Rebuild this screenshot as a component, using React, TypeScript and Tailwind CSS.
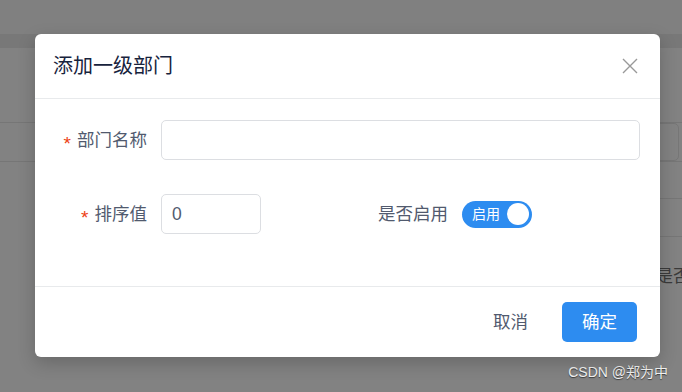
const font = "font-['Liberation_Sans','Noto_Sans_CJK_SC',sans-serif]";

function Required() {
  return <span className="mr-[6px] pt-[6px] text-[19px] leading-none text-[#ed4014]">*</span>;
}

function Label({ text, required }: { text: string; required?: boolean }) {
  return (
    <div className="flex w-[106px] shrink-0 items-center justify-end pr-[14px] text-[17.5px] text-[#515a6e]">
      {required && <Required />}
      <span>{text}</span>
    </div>
  );
}

function Switch() {
  return (
    <div className="flex h-[27px] w-[70px] items-center justify-between rounded-full bg-[#2d8cf0] pl-[10px] pr-[3px]">
      <span className="text-[14px] leading-none text-white">启用</span>
      <span className="h-[22px] w-[22px] rounded-full bg-white" />
    </div>
  );
}

function Page() {
  // the page behind the mask, dimmed
  return (
    <div className="flex h-full w-full flex-col bg-[#828282]">
      <div className="h-[34px] bg-[#808080]" />
      <div className="h-[14px] bg-[#787878]" />
      <div className="h-[74px]" />
      <div className="flex h-[40px] border-y border-[#767676]">
        <div className="ml-auto h-full w-[40px] rounded-[5px] border border-[#767676] mr-[3px]" />
      </div>
      <div className="h-[36px]" />
      <div className="flex h-[39px]">
        <div className="ml-auto h-full w-[30px] border-y border-[#767676]" />
      </div>
      <div className="flex h-[48px] items-end">
        <span className="whitespace-nowrap pl-[656px] text-[17px] leading-none text-[#3a3a3a]">是否启用</span>
      </div>
      <div className="flex flex-1 items-end justify-end pb-[9px] pr-[14px]">
        <span className="text-[14px] text-[#f2f2f2] [text-shadow:0_1px_1px_rgba(0,0,0,0.55)]">CSDN @郑为中</span>
      </div>
    </div>
  );
}

export default function App() {
  return (
    <div className={`relative h-[392px] w-[682px] overflow-hidden ${font}`}>
      <Page />
      <div className="absolute left-[35px] top-[34px] w-[625px] rounded-[6px] bg-white shadow-[0_6px_18px_rgba(0,0,0,0.2)]">
        <div className="flex h-[65px] items-center justify-between border-b border-[#e8eaec] pl-[18px] pr-[22px]">
          <span className="text-[20px] text-[#17233d]">添加一级部门</span>
          <svg width="16" height="16" viewBox="0 0 16 16" className="text-[#999]">
            <path d="M1 1 L15 15 M15 1 L1 15" stroke="currentColor" strokeWidth="1.4" fill="none" />
          </svg>
        </div>
        <div className="flex flex-col gap-[34px] px-[20px] pb-[52px] pt-[21px]">
          <div className="flex h-[40px] items-center">
            <Label text="部门名称" required />
            <div className="h-[40px] flex-1 rounded-[5px] border border-[#dcdee2]" />
          </div>
          <div className="flex h-[40px] items-center">
            <div className="flex w-[301px] items-center">
              <Label text="排序值" required />
              <div className="flex h-[40px] w-[100px] items-center rounded-[5px] border border-[#dcdee2] pl-[10px] text-[17.5px] text-[#515a6e]">
                0
              </div>
            </div>
            <Label text="是否启用" />
            <Switch />
          </div>
        </div>
        <div className="flex items-center justify-end gap-[14px] border-t border-[#e8eaec] pb-[15px] pl-[18px] pr-[23px] pt-[15px]">
          <button className="h-[40px] w-[75px] text-[17.5px] text-[#515a6e]">取消</button>
          <button className="h-[40px] w-[75px] rounded-[5px] bg-[#2d8cf0] text-[17.5px] text-white">确定</button>
        </div>
      </div>
    </div>
  );
}
